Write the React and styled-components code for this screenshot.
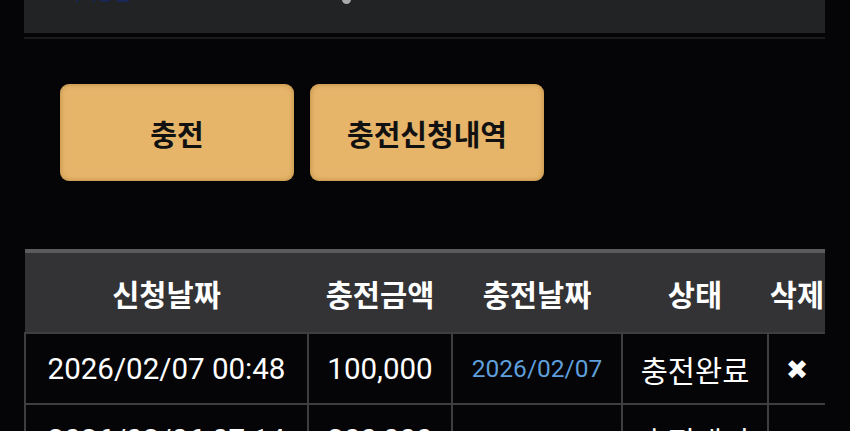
import React from 'react'
import styled, { createGlobalStyle } from 'styled-components'

const GlobalStyle = createGlobalStyle`
  html, body {
    margin: 0;
    padding: 0;
    background: #050507;
    overflow: hidden;
  }
  body {
    font-family: Roboto, "Noto Sans CJK KR", sans-serif;
    color: #fff;
  }
`

const Page = styled.div`
  width: 850px;
  height: 431px;
  overflow: hidden;
  padding: 0 25px 0 24px;
  box-sizing: border-box;
`

const TopPanel = styled.div`
  height: 33px;
  background: #222325;
  overflow: hidden;
  display: flex;
  align-items: flex-start;
  padding-left: 40px;
`

const TopLabel = styled.span`
  margin-top: -21px;
  font-size: 18px;
  color: #1a2656;
  font-weight: 700;
`

const TopDot = styled.span`
  margin-top: -5px;
  margin-left: 212px;
  width: 9px;
  height: 9px;
  border-radius: 50%;
  background: #a9a9ab;
`

const Divider = styled.div`
  margin-top: 4px;
  height: 2px;
  background: #1b1b1e;
`

const ButtonRow = styled.div`
  display: flex;
  gap: 16px;
  padding: 45px 0 0 36px;
`

const GoldButton = styled.button`
  width: 234px;
  height: 97px;
  border: none;
  border-radius: 9px;
  background: #e6b56a;
  box-shadow: inset 0 0 4px 1px rgba(160, 115, 45, 0.5), 0 1px 2px rgba(0, 0, 0, 0.6);
  font-family: "Noto Sans CJK KR", sans-serif;
  font-weight: 700;
  font-size: 29px;
  color: #111;
  padding: 0;
  cursor: pointer;
`

const TableWrap = styled.div`
  margin-top: 68px;
  overflow: hidden;
`

const Table = styled.table`
  width: 801px;
  table-layout: fixed;
  border-collapse: collapse;
`

const Head = styled.th`
  height: 79px;
  background: #333335;
  border-top: 4px solid #5b5b5d;
  border-bottom: 1px solid #101012;
  font-family: "Noto Sans CJK KR", sans-serif;
  font-weight: 700;
  font-size: 29.5px;
  color: #fff;
  padding: 0;
  white-space: nowrap;
  text-align: center;
  overflow: hidden;
`

const Cell = styled.td`
  height: 69px;
  border: 2px solid #3e3e40;
  padding: 0;
  text-align: center;
  white-space: nowrap;
  overflow: hidden;
  font-size: ${p => (p.$small ? '24.5px' : p.$hangul ? '29.5px' : '29.5px')};
  color: ${p => (p.$link ? '#5e9fdc' : '#fff')};
  font-family: ${p => (p.$hangul ? '"Noto Sans CJK KR", sans-serif' : 'Roboto, "Noto Sans CJK KR", sans-serif')};
`

const DeleteMark = styled.span`
  font-size: 27px;
  font-weight: 700;
  font-family: "DejaVu Sans", sans-serif;
`

const columns = [283, 144, 170, 146, 58]

const rows = [
  { requested: '2026/02/07 00:48', amount: '100,000', charged: '2026/02/07', status: '충전완료' },
  { requested: '2026/02/06 07:14', amount: '200,000', charged: '', status: '충전대기' }
]

export default function App () {
  return (
    <Page>
      <GlobalStyle />
      <TopPanel>
        <TopLabel>머니충전</TopLabel>
        <TopDot />
      </TopPanel>
      <Divider />
      <ButtonRow>
        <GoldButton>충전</GoldButton>
        <GoldButton>충전신청내역</GoldButton>
      </ButtonRow>
      <TableWrap>
        <Table>
          <colgroup>
            {columns.map((w, i) => <col key={i} style={{ width: w }} />)}
          </colgroup>
          <thead>
            <tr>
              <Head>신청날짜</Head>
              <Head>충전금액</Head>
              <Head>충전날짜</Head>
              <Head>상태</Head>
              <Head>삭제</Head>
            </tr>
          </thead>
          <tbody>
            {rows.map((row, i) => (
              <tr key={i}>
                <Cell>{row.requested}</Cell>
                <Cell>{row.amount}</Cell>
                <Cell $small $link>{row.charged}</Cell>
                <Cell $hangul>{row.status}</Cell>
                <Cell><DeleteMark>✖</DeleteMark></Cell>
              </tr>
            ))}
          </tbody>
        </Table>
      </TableWrap>
    </Page>
  )
}
